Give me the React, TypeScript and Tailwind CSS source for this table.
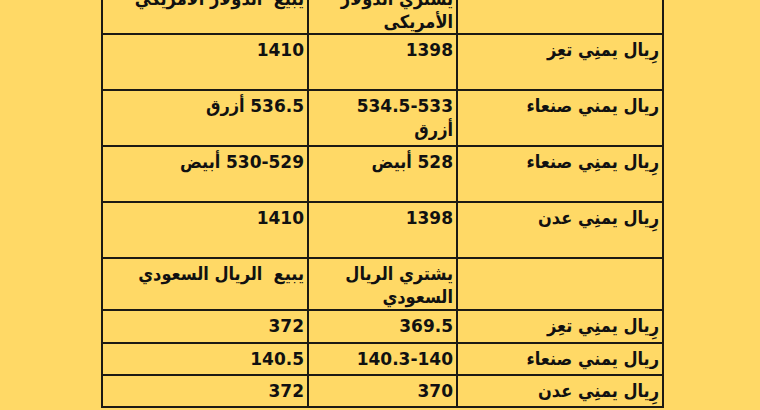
import React from "react";

type Row = { label: string; buy: string; sell: string; h: string };

const rows: Row[] = [
  { label: "", buy: "يشتري الدولار الأمريكى", sell: "يبيع  الدولار الأمريكي", h: "h-[49px]" },
  { label: "رِيال يمنِي تعِز", buy: "1398", sell: "1410", h: "h-[56px]" },
  { label: "ريال يمني صنعاء", buy: "534.5-533\nأزرق", sell: "536.5 أزرق", h: "h-[56px]" },
  { label: "رِيال يمنِي صنعاء", buy: "528 أبيض", sell: "530-529 أبيض", h: "h-[56px]" },
  { label: "رِيال يمنِي عدن", buy: "1398", sell: "1410", h: "h-[56px]" },
  { label: "", buy: "يشتري الريال السعودي", sell: "يبيع  الريال السعودي", h: "h-[52px]" },
  { label: "رِيال يمنِي تعِز", buy: "369.5", sell: "372", h: "h-[33px]" },
  { label: "ريال يمني صنعاء", buy: "140.3-140", sell: "140.5", h: "h-[32px]" },
  { label: "رِيال يمنِي عدن", buy: "370", sell: "372", h: "h-[32px]" },
];

const cell =
  "border-2 border-[#1c1a14] align-top text-right pr-[3px] pt-[3px] whitespace-pre-wrap";

// digits look wider in the screenshot, so they get the regular face
function Text({ value }: { value: string }) {
  const parts = value.split(/([0-9][0-9.\-]*)/);
  return (
    <>
      {parts.map((p, i) =>
        /^[0-9]/.test(p) ? (
          <span key={i} className="font-['DejaVu_Sans'] text-[17px]">
            {p}
          </span>
        ) : (
          <span key={i}>{p}</span>
        )
      )}
    </>
  );
}

export default function App() {
  return (
    <div
      className="w-[760px] h-[410px] overflow-hidden bg-[#ffd966] text-[#111] font-bold"
      style={{ fontFamily: '"DejaVu Sans Condensed", "DejaVu Sans", sans-serif' }}
    >
      <div className="ml-[101px] mt-[-18px]">
        <table
          dir="rtl"
          className="table-fixed border-collapse w-[563px] text-[18px] leading-[23px]"
        >
          <colgroup>
            <col className="w-[206px]" />
            <col className="w-[149px]" />
            <col className="w-[206px]" />
          </colgroup>
          <tbody>
            {rows.map((r, i) => (
              <tr key={i} className={r.h}>
                <td className={cell}>
                  <Text value={r.label} />
                </td>
                <td className={cell}>
                  <Text value={r.buy} />
                </td>
                <td className={cell}>
                  <Text value={r.sell} />
                </td>
              </tr>
            ))}
          </tbody>
        </table>
      </div>
    </div>
  );
}
